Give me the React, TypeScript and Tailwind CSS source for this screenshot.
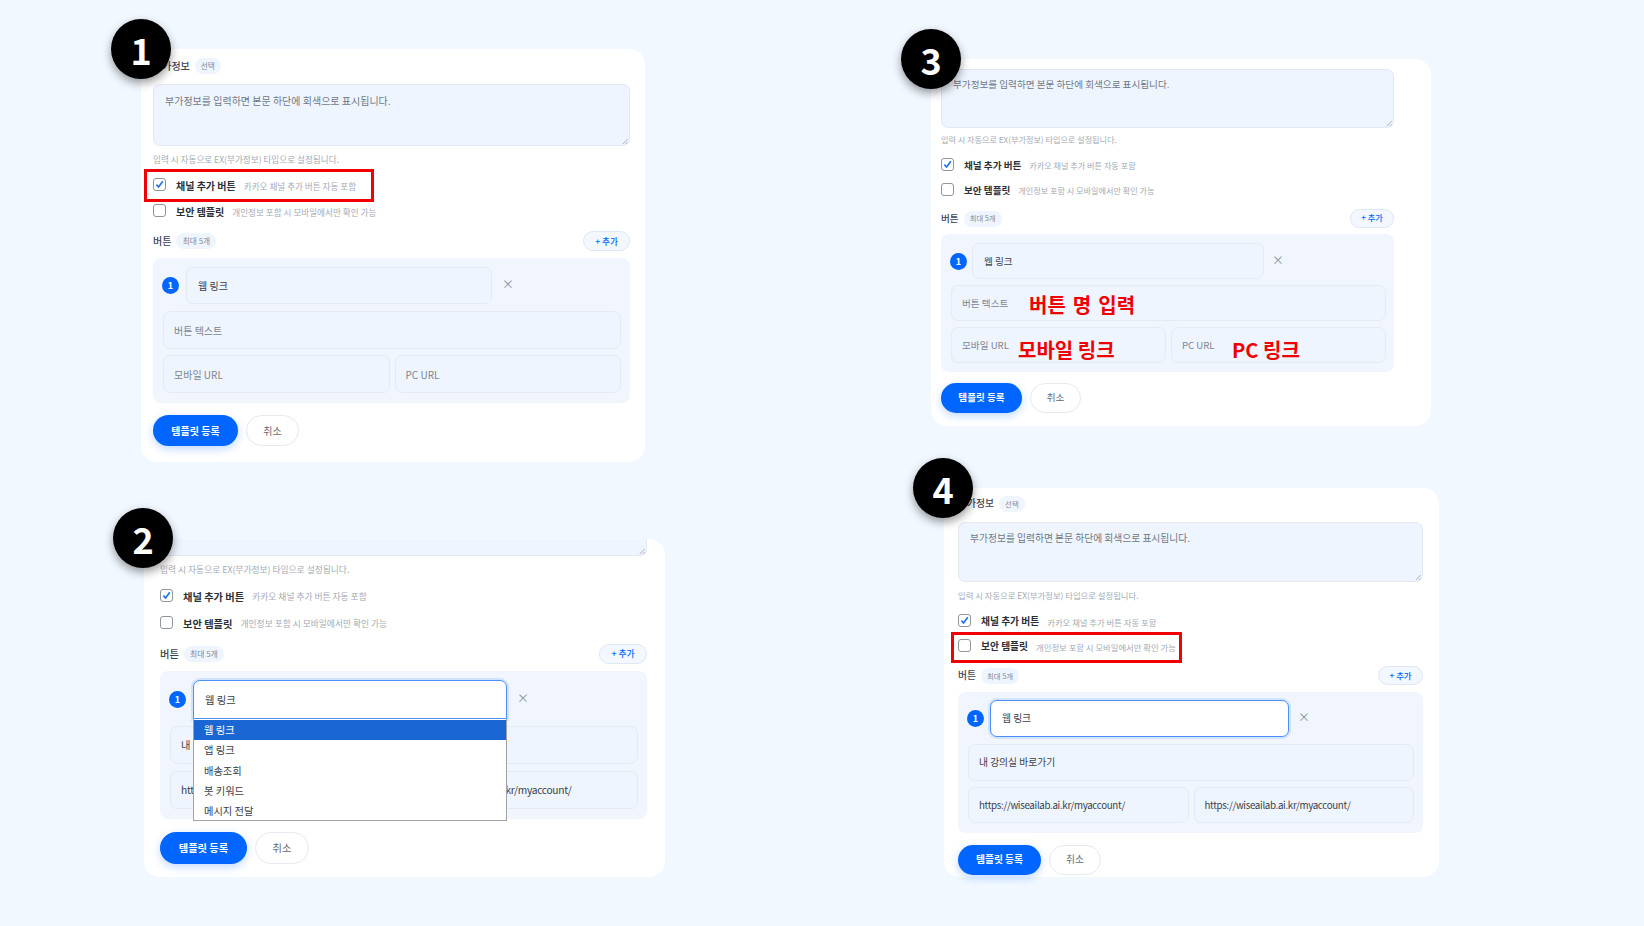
import React from 'react';

const font = { fontFamily: '"Noto Sans CJK KR", "Noto Sans", sans-serif' };

interface Spec {
  num: string;
  card: string;
  badge: string;
  text: string;
  desc: string;
  pill: string;
  title?: string;
  area: string;
  areaText: string;
  hint: string;
  check1: string;
  check2: string;
  header: string;
  addBtn: string;
  pillBox: string;
  panel: string;
  circle: string;
  select: string;
  xMark: string;
  input1: string;
  rowWrap: string;
  actions: string;
  primary: string;
  cancel: string;
}

const specOne: Spec = {
  num: '1',
  card: 'mt-[49px] ml-0 w-[504px] h-[413px] pl-[12px] pr-[15px]',
  badge: '-left-[30px] -top-[30px]',
  text: 'text-[10px]',
  desc: 'text-[8.6px]',
  pill: 'text-[7.7px]',
  title: 'mt-[9px] h-[15px]',
  area: 'mt-[11px] h-[62px]',
  areaText: 'pt-[8px]',
  hint: 'mt-[6px]',
  check1: 'mt-[12px]',
  check2: 'mt-[10px]',
  header: 'mt-[11px] h-[20px]',
  addBtn: 'w-[47px]',
  pillBox: 'w-[40px] ml-[5px]',
  panel: 'mt-[7px] h-[145px] pt-[9px] pl-[10px] pr-[9px]',
  circle: 'ml-[-1px] mr-[7px]',
  select: 'w-[306px] h-[37px]',
  xMark: 'ml-[10px]',
  input1: 'mt-[7px] h-[38px]',
  rowWrap: 'mt-[6px] h-[38px]',
  actions: 'mt-[12px] h-[31px]',
  primary: 'w-[85px]',
  cancel: 'w-[53px]',
};

const specTwo: Spec = {
  num: '2',
  card: 'mt-[77px] ml-[3px] w-[521px] h-[338px] pl-[16px] pr-[18px]',
  badge: '-left-[31px] -top-[31px]',
  text: 'text-[10.25px]',
  desc: 'text-[8.75px]',
  pill: 'text-[7.8px]',
  area: 'h-[17px] border-t-0 rounded-t-none',
  areaText: 'pt-[8px]',
  hint: 'mt-[7px]',
  check1: 'mt-[12px]',
  check2: 'mt-[11px]',
  header: 'mt-[12px] h-[20px]',
  addBtn: 'w-[48px]',
  pillBox: 'w-[40px] ml-[5px]',
  panel: 'mt-[7px] h-[148px] pt-[9px] pl-[10px] pr-[9px]',
  circle: 'ml-[-1px] mr-[7px]',
  select: 'w-[314px] h-[39px]',
  xMark: 'ml-[10px]',
  input1: 'mt-[7px] h-[38px]',
  rowWrap: 'mt-[7px] h-[38px]',
  actions: 'mt-[13px] h-[32px]',
  primary: 'w-[87px]',
  cancel: 'w-[54px]',
};

const specThree: Spec = {
  num: '3',
  card: 'mt-[59px] ml-0 w-[500px] h-[367px] pl-[10px] pr-[37px]',
  badge: '-left-[30px] -top-[30px]',
  text: 'text-[9.6px]',
  desc: 'text-[8.15px]',
  pill: 'text-[7.3px]',
  area: 'mt-[10px] h-[59px]',
  areaText: 'pt-[7px]',
  hint: 'mt-[5px]',
  check1: 'mt-[11px]',
  check2: 'mt-[9px]',
  header: 'mt-[10px] h-[19px]',
  addBtn: 'w-[44px]',
  pillBox: 'w-[38px] ml-[5px]',
  panel: 'mt-[6px] h-[138px] pt-[9px] pl-[10px] pr-[8px]',
  circle: 'ml-[-1px] mr-[5px]',
  select: 'w-[292px] h-[36px]',
  xMark: 'ml-[8px]',
  input1: 'mt-[6px] h-[36px]',
  rowWrap: 'mt-[6px] h-[36px]',
  actions: 'mt-[11px] h-[30px]',
  primary: 'w-[81px]',
  cancel: 'w-[51px]',
};

const specFour: Spec = {
  num: '4',
  card: 'mt-[62px] ml-[13px] w-[495px] h-[389px] pl-[14px] pr-[16px]',
  badge: '-left-[31px] -top-[30px]',
  text: 'text-[9.75px]',
  desc: 'text-[8.35px]',
  pill: 'text-[7.4px]',
  title: 'mt-[8px] h-[15px]',
  area: 'mt-[11px] h-[60px]',
  areaText: 'pt-[8px]',
  hint: 'mt-[6px]',
  check1: 'mt-[12px]',
  check2: 'mt-[9px]',
  header: 'mt-[11px] h-[19px]',
  addBtn: 'w-[45px]',
  pillBox: 'w-[38px] ml-[5px]',
  panel: 'mt-[7px] h-[141px] pt-[8px] pl-[10px] pr-[9px]',
  circle: 'ml-[-1px] mr-[6px]',
  select: 'w-[299px] h-[37px]',
  xMark: 'ml-[9px]',
  input1: 'mt-[7px] h-[37px]',
  rowWrap: 'mt-[6px] h-[36px]',
  actions: 'mt-[12px] h-[30px]',
  primary: 'w-[83px]',
  cancel: 'w-[52px]',
};

const Checkbox = ({ checked }: { checked?: boolean }) => (
  <span className="w-[13px] h-[13px] -mt-[3px] shrink-0 rounded-[3px] border border-[#8f959e] bg-white flex items-center justify-center">
    {checked && (
      <svg viewBox="0 0 12 12" className="w-[11px] h-[11px]" fill="none" stroke="#1a73e8" strokeWidth="1.8">
        <path d="M2.6 6.2 L5 8.8 L9.6 2.4" />
      </svg>
    )}
  </span>
);

const CheckRow = ({
  s, className, label, desc, checked, redBox,
}: { s: Spec; className: string; label: string; desc: string; checked?: boolean; redBox?: string }) => (
  <div className={`relative flex items-center h-[16px] ${className}`}>
    <Checkbox checked={checked} />
    <span className={`ml-[10px] font-bold text-[#2b2f36] leading-none ${s.text}`}>{label}</span>
    <span className={`ml-[8px] text-[#a3abb6] leading-none ${s.desc}`}>{desc}</span>
    {redBox && <div className={`absolute border-[3px] border-[#f00000] ${redBox}`} />}
  </div>
);

const Pill = ({ s, className, children }: { s: Spec; className: string; children: React.ReactNode }) => (
  <span className={`h-[16px] rounded-full bg-[#eff5ff] text-[#7f8896] flex items-center justify-center leading-none ${s.pill} ${className}`}>
    {children}
  </span>
);

const Field = ({
  s, className, placeholder, value, url,
}: { s: Spec; className: string; placeholder?: string; value?: string; url?: boolean }) => (
  <div className={`rounded-[7px] border border-[#e4ebf7] bg-[#eff5ff] flex items-center pl-[10px] pt-[1px] overflow-hidden ${className}`}>
    {value ? (
      <span className={`text-[#3b4048] leading-none whitespace-nowrap ${s.text} ${url ? 'tracking-[-0.33px]' : ''}`}>{value}</span>
    ) : (
      <span className={`text-[#7b8490] leading-none whitespace-nowrap ${s.text}`}>{placeholder}</span>
    )}
  </div>
);

const menu = ['웹 링크', '앱 링크', '배송조회', '봇 키워드', '메시지 전달'];
const link = 'https://wiseailab.ai.kr/myaccount/';

const FormCard = ({
  s, focused, open, filled, red1, red2, children,
}: {
  s: Spec;
  focused?: boolean;
  open?: boolean;
  filled?: boolean;
  red1?: string;
  red2?: string;
  children?: React.ReactNode;
}) => (
  <div className={`relative bg-white rounded-[16px] flex flex-col shrink-0 ${s.card}`}>
    <div className={`absolute z-20 w-[60px] h-[60px] rounded-full bg-black text-white flex items-center justify-center font-bold text-[36px] leading-none shadow-[0_4px_10px_rgba(0,0,0,0.4)] ${s.badge}`}>
      {s.num}
    </div>

    {s.title && (
      <div className={`flex items-center ${s.title}`}>
        <span className={`font-medium text-[#3d4350] leading-none ${s.text}`}>부가정보</span>
        <Pill s={s} className="w-[26px] ml-[5px]">선택</Pill>
      </div>
    )}

    <div className={`rounded-[7px] border border-[#e1e8f4] bg-[#eff5ff] pl-[11px] relative overflow-hidden shrink-0 ${s.area} ${s.areaText}`}>
      {s.num !== '2' && (
        <span className={`block text-[#6f7884] leading-[1.5] ${s.text}`}>부가정보를 입력하면 본문 하단에 회색으로 표시됩니다.</span>
      )}
      <svg viewBox="0 0 8 8" className="absolute right-[1px] bottom-[1px] w-[6px] h-[6px]" stroke="#8a8f98" strokeWidth="0.9">
        <path d="M1 8 L8 1 M5 8 L8 5" />
      </svg>
    </div>

    <div className={`h-[14px] flex items-center text-[#a3abb6] leading-none ${s.desc} ${s.hint}`}>
      입력 시 자동으로 EX(부가정보) 타입으로 설정됩니다.
    </div>

    <CheckRow s={s} className={s.check1} label="채널 추가 버튼" desc="카카오 채널 추가 버튼 자동 포함" checked redBox={red1} />
    <CheckRow s={s} className={s.check2} label="보안 템플릿" desc="개인정보 포함 시 모바일에서만 확인 가능" redBox={red2} />

    <div className={`flex items-center ${s.header}`}>
      <span className={`font-medium text-[#3d4350] leading-none ${s.text}`}>버튼</span>
      <Pill s={s} className={s.pillBox}>최대 5개</Pill>
      <span className={`ml-auto h-full rounded-full border border-[#dfe7f4] bg-[#f3f7ff] text-[#0066ff] font-medium flex items-center justify-center leading-none ${s.desc} ${s.addBtn}`}>
        + 추가
      </span>
    </div>

    <div className={`relative rounded-[8px] bg-[#f0f5fe] flex flex-col ${s.panel}`}>
      <div className="relative flex items-center shrink-0">
        <span className={`w-[17px] h-[17px] rounded-full bg-[#0066ff] text-white text-[9px] font-bold flex items-center justify-center leading-none shrink-0 ${s.circle}`}>
          1
        </span>
        <div className={`relative ${s.select}`}>
          <div className={`w-full h-full flex items-center pl-[11px] pt-[1px] text-[#3b4048] leading-none rounded-[7px] ${s.text} ${
            focused
              ? 'bg-white border-[1.5px] border-[#4d8ff8] shadow-[0_0_0_2px_rgba(0,102,255,0.12)]'
              : 'bg-[#eff5ff] border border-[#e4ebf7]'
          } ${open ? 'rounded-b-none' : ''}`}>
            웹 링크
          </div>
          {open && (
            <div className="absolute z-10 left-0 right-0 top-full h-[102px] pt-[1px] bg-white border border-t-0 border-[#a3a3a3] overflow-hidden">
              {menu.map((m, i) => (
                <div key={m} className={`h-[20.3px] flex items-center pl-[10px] leading-none ${s.text} ${i === 0 ? 'bg-[#1a66d2] text-white' : 'text-[#3b4048]'}`}>
                  {m}
                </div>
              ))}
            </div>
          )}
        </div>
        <span className={`text-[#8a93a0] text-[12px] leading-none -mt-[3px] ${s.xMark}`}>×</span>
      </div>

      <Field s={s} className={`shrink-0 ${s.input1}`} placeholder="버튼 텍스트" value={filled ? '내 강의실 바로가기' : undefined} />

      <div className={`grid grid-cols-2 gap-[5px] shrink-0 ${s.rowWrap}`}>
        <Field s={s} className="h-full" placeholder="모바일 URL" url value={filled ? link : undefined} />
        <Field s={s} className="h-full" placeholder="PC URL" url value={filled ? link : undefined} />
      </div>
      {children}
    </div>

    <div className={`flex items-stretch gap-[8px] ${s.actions}`}>
      <span className={`rounded-full bg-[#0066ff] text-white font-bold flex items-center justify-center leading-none shadow-[0_3px_8px_rgba(0,102,255,0.25)] ${s.text} ${s.primary}`}>
        템플릿 등록
      </span>
      <span className={`rounded-full bg-white border border-[#e5e9f0] text-[#636b76] flex items-center justify-center leading-none ${s.text} ${s.cancel}`}>
        취소
      </span>
    </div>
  </div>
);

export default function App() {
  return (
    <div style={font} className="w-[1644px] h-[926px] bg-[#f1f8ff] flex overflow-hidden">
      <div className="w-[931px] shrink-0 pl-[141px] flex flex-col">
        <FormCard s={specOne} red1="-left-[9px] -top-[9px] w-[230px] h-[33px]" />
        <FormCard s={specTwo} focused open filled />
      </div>
      <div className="flex flex-col">
        <FormCard s={specThree}>
          <span className="absolute left-[88px] top-[61px] text-[20px] font-bold text-[#f00000] leading-none whitespace-nowrap [word-spacing:2.5px]">버튼 명 입력</span>
          <span className="absolute left-[77px] top-[106px] text-[20px] font-bold text-[#f00000] leading-none whitespace-nowrap">모바일 링크</span>
          <span className="absolute left-[291px] top-[106px] text-[20px] font-bold text-[#f00000] leading-none whitespace-nowrap">PC 링크</span>
        </FormCard>
        <FormCard s={specFour} focused filled red2="-left-[7px] -top-[7px] w-[231px] h-[31px]" />
      </div>
    </div>
  );
}
